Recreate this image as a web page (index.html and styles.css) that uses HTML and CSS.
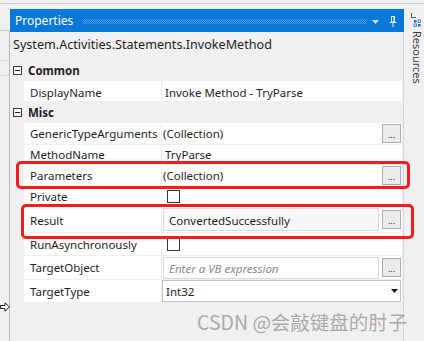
FILE: index.html
```html
<!DOCTYPE html>
<html>
<head>
<meta charset="utf-8">
<title>Properties</title>
<link rel="stylesheet" href="styles.css">
</head>
<body>
<div class="topline"></div>
<div class="window">
  <div class="leftstrip"><div class="leftbox"><div class="leftband"></div></div></div>
  <div class="panel">
    <div class="titlebar">
      <span class="title">Properties</span>
      <span class="dots"></span>
      <svg class="dd" viewBox="0 0 7 4"><polygon points="0,0 7,0 3.5,4" fill="#cfe3fa"/></svg>
      <svg class="pin" viewBox="0 0 8 11"><rect x="2.5" y="0.5" width="3" height="5.5" fill="none" stroke="#e8f1fc" stroke-width="1"/><rect x="4.5" y="0.5" width="1" height="5.5" fill="#e8f1fc"/><line x1="0.5" y1="6.5" x2="7.5" y2="6.5" stroke="#e8f1fc" stroke-width="1"/><line x1="4" y1="7" x2="4" y2="11" stroke="#e8f1fc" stroke-width="1"/></svg>
    </div>
    <div class="body">
      <div class="typename">System.Activities.Statements.InvokeMethod</div>
      <div class="grid">
        <div class="cat"><span class="toggle"></span><span class="cat-label">Common</span></div>
        <div class="row r21"><span class="gutter"></span><span class="name">DisplayName</span><span class="value"><span class="val">Invoke Method - TryParse</span></span></div>
        <div class="cat"><span class="toggle"></span><span class="cat-label">Misc</span></div>
        <div class="row r22"><span class="gutter"></span><span class="name">GenericTypeArguments</span><span class="value"><span class="val tight">(Collection)</span><span class="btn">...</span></span></div>
        <div class="row r20"><span class="gutter"></span><span class="name">MethodName</span><span class="value"><span class="val">TryParse</span></span></div>
        <div class="row r21"><span class="gutter"></span><span class="name">Parameters</span><span class="value"><span class="val tight">(Collection)</span><span class="btn">...</span></span></div>
        <div class="row r21"><span class="gutter"></span><span class="name">Private</span><span class="value"><span class="check"></span></span></div>
        <div class="row r26"><span class="gutter"></span><span class="name name-low">Result</span><span class="value"><span class="tb">ConvertedSuccessfully</span><span class="btn">...</span></span></div>
        <div class="row r23"><span class="gutter"></span><span class="name">RunAsynchronously</span><span class="value"><span class="check"></span></span></div>
        <div class="row r24"><span class="gutter"></span><span class="name">TargetObject</span><span class="value"><span class="tb tb-empty"><span class="placeholder">Enter a VB expression</span></span><span class="btn">...</span></span></div>
        <div class="row r23"><span class="gutter"></span><span class="name">TargetType</span><span class="value"><span class="combo"><span class="combo-text">Int32</span><svg class="combo-arrow" viewBox="0 0 7 4"><polygon points="0,0 7,0 3.5,4" fill="#1a1a1a"/></svg></span></span></div>
      </div>
    </div>
  </div>
  <div class="rightstrip">
    <svg class="res-icon" viewBox="0 0 12 16"><path d="M1.5 0 V4.5 H6" fill="none" stroke="#555" stroke-width="1"/><rect x="4" y="7" width="2.5" height="2.5" fill="#1e6fd0"/><rect x="8" y="7" width="2.5" height="2.5" fill="none" stroke="#1e6fd0" stroke-width="0.8"/><rect x="4" y="11" width="2.5" height="2.5" fill="none" stroke="#1e6fd0" stroke-width="0.8"/><rect x="8" y="11" width="2.5" height="2.5" fill="#1e6fd0"/></svg>
    <span class="res-label">Resources</span>
  </div>
</div>
<div class="hl hl-params"></div>
<div class="hl hl-result"></div>
<svg class="cursor" viewBox="0 0 10 10"><path d="M0.5 3.5 H5 V0.8 L9.3 5 L5 9.2 V6.5 H0.5 Z" fill="#fff" stroke="#222" stroke-width="1"/></svg>
<div class="watermark">CSDN @会敲键盘的肘子</div>
</body>
</html>
```
FILE: styles.css
```css
* { box-sizing: border-box; }
html, body { margin: 0; padding: 0; }
body {
  width: 424px;
  height: 341px;
  overflow: hidden;
  background: #f0f0f0;
  font-family: "Noto Sans", "Segoe UI", sans-serif;
  font-size: 11.5px;
  color: #1e1e1e;
  position: relative;
}
.topline { height: 4px; border-bottom: 1px solid #d2d2d2; }
.window { display: flex; height: 337px; }
.leftstrip { width: 10px; padding-top: 26px; }
.leftbox { height: 100%; border-top: 1px solid #c8c8c8; border-right: 1px solid #b4b4b4; padding-top: 29px; }
.leftband { height: 16px; border-top: 1px solid #d8d8d8; border-bottom: 1px solid #d8d8d8; }
.panel { width: 394px; margin-top: 5px; display: flex; flex-direction: column; }
.titlebar {
  height: 23px;
  background: #0a78d7;
  color: #fff;
  display: flex;
  align-items: center;
  padding: 0 7px 0 5px;
}
.title { font-size: 12px; }
.dots {
  flex: 1;
  height: 5px;
  margin: 1px 5px 0 10px;
  background: repeating-conic-gradient(#4e9be4 0 25%, transparent 0 50%) 0 0 / 2px 2px;
}
.dd { width: 7px; height: 4px; margin: 2px 10px 0 0; }
.pin { width: 8px; height: 11px; margin-top: 1px; }
.body { flex: 1; border-right: 1px solid #d6d6d6; padding-right: 1px; }
.typename { height: 28px; line-height: 26px; padding-left: 3px; font-size: 12.6px; }
.cat { height: 21px; display: flex; align-items: center; }
.toggle {
  width: 9px; height: 9px;
  margin-left: 3px;
  border: 1px solid #3a3a3a;
  position: relative;
  background: #fafafa;
}
.toggle::after {
  content: "";
  position: absolute;
  left: 1px; right: 1px; top: 3px;
  height: 1px;
  background: #222;
}
.cat-label { margin-left: 6px; font-weight: bold; }
.row { display: flex; border-bottom: 1px solid #f0f0f0; }
.r20 { height: 20px; }
.r21 { height: 21px; }
.r22 { height: 22px; }
.r23 { height: 23px; }
.r24 { height: 24px; }
.r26 { height: 26px; }
.gutter { width: 14px; flex: none; }
.name {
  width: 137px; flex: none;
  background: #fff;
  padding-left: 6px;
  display: flex; align-items: center;
  white-space: nowrap;
}
.row:nth-child(2) .name, .row:nth-child(2) .val { padding-top: 2px; }
.name-low { padding-top: 2px; }
.value {
  flex: 1;
  background: #fff;
  border-left: 1px solid #ececec;
  display: flex; align-items: center;
  min-width: 0;
}
.val { padding-left: 3px; white-space: nowrap; }
.val.tight { padding-left: 1px; }
.btn {
  margin-left: auto;
  margin-right: 1px;
  width: 19px; height: 19px;
  flex: none;
  border: 1px solid #adadad;
  background: #ebebeb;
  font-size: 9px;
  line-height: 9px;
  color: #222;
  display: flex; align-items: flex-end; justify-content: center;
  padding-bottom: 3px;
}
.check {
  width: 13px; height: 13px;
  margin-left: 5px;
  border: 1px solid #333;
  background: #fff;
}
.tb {
  flex: 1;
  height: 23px;
  margin-left: 1px;
  margin-right: 3px;
  border: 1px solid #dadada;
  background: #f8f8f8;
  padding-left: 5px;
  padding-top: 1px;
  display: flex; align-items: center;
  white-space: nowrap;
}
.r24 .tb { height: 22px; }
.tb-empty { background: #fff; }
.placeholder { font-style: italic; color: #8a8a8a; }
.combo {
  flex: 1;
  height: 22px;
  margin-right: 1px;
  border: 1px solid #c4c4c4;
  background: #fff;
  padding-left: 3px;
  display: flex; align-items: center;
}
.combo-arrow { width: 7px; height: 4px; margin-left: auto; margin-right: 2px; }
.rightstrip { width: 20px; padding-top: 9px; display: flex; flex-direction: column; align-items: flex-start; }
.res-icon { width: 12px; height: 16px; margin-left: 6px; }
.res-label {
  writing-mode: vertical-rl;
  font-size: 11px;
  line-height: 12px;
  color: #3c3c3c;
  margin-left: 7px;
  margin-top: 2px;
}
.hl {
  position: absolute;
  border: 3px solid #f21d1d;
  border-radius: 5px;
}
.hl-params { left: 16px; top: 161px; width: 394px; height: 28px; }
.hl-result { left: 21px; top: 204px; width: 393px; height: 35px; }
.cursor { position: absolute; left: 0; top: 302px; width: 10px; height: 10px; }
.watermark {
  position: absolute;
  left: 197px;
  top: 312px;
  font-family: "Noto Sans CJK SC", "Noto Sans", sans-serif;
  font-size: 19.5px;
  line-height: 20px;
  color: #ababab;
  white-space: nowrap;
}
```
